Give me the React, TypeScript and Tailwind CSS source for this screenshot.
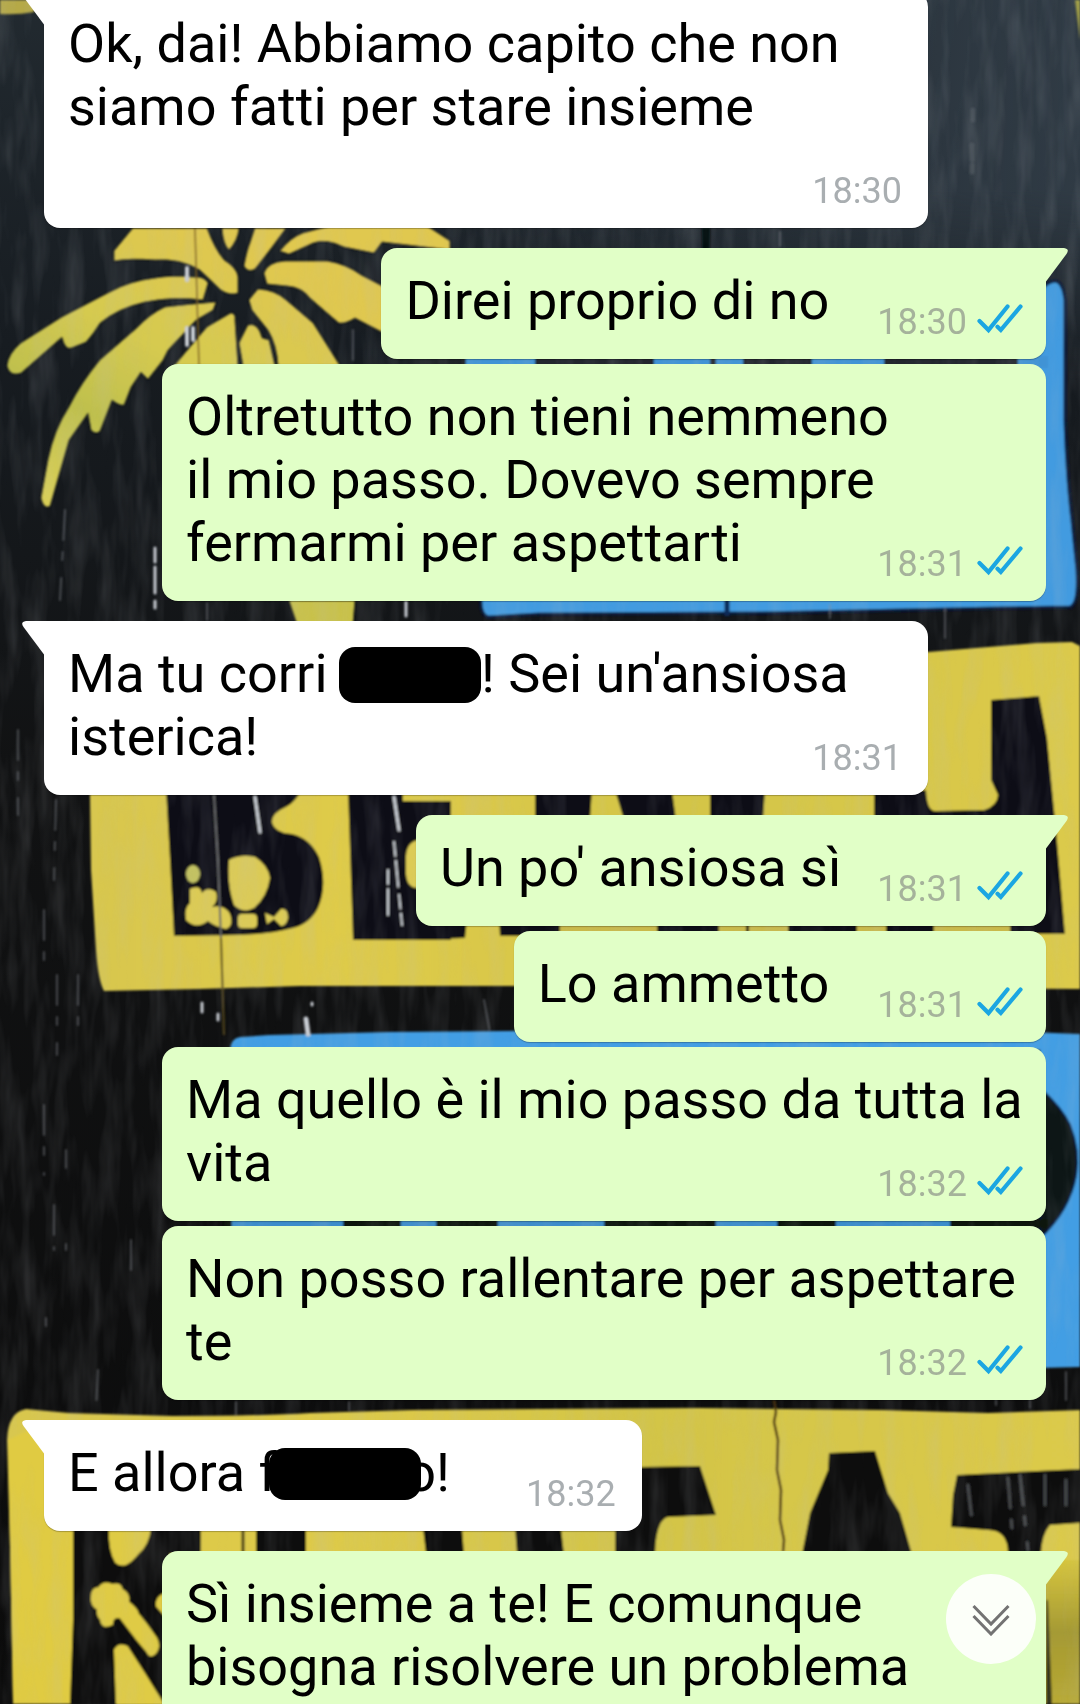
import type { ReactNode } from "react";
import clsx from "clsx";

type Message = {
  id: number;
  from: "me" | "them";
  lines: ReactNode[];
  time?: string;
  wide?: boolean;
  gap?: string;
};

function Redacted({ className }: { className: string }) {
  return (
    <span
      aria-label="redacted"
      className={clsx("relative -mt-2.5 -mb-1 -ml-0.5 inline-block rounded-2xl bg-black align-middle", className)}
    />
  );
}

const messages: Message[] = [
  {
    id: 1,
    from: "them",
    lines: ["Ok, dai! Abbiamo capito che non", "siamo fatti per stare insieme", "\u00a0"],
    time: "18:30",
    wide: true,
  },
  { id: 2, from: "me", lines: ["Direi proprio di no"], time: "18:30", gap: "pl-12" },
  {
    id: 3,
    from: "me",
    lines: ["Oltretutto non tieni nemmeno", "il mio passo. Dovevo sempre", "fermarmi per aspettarti"],
    time: "18:31",
    wide: true,
  },
  {
    id: 4,
    from: "them",
    lines: [
      <>
        Ma tu corri <Redacted className="h-14 w-[142px]" />! Sei un'ansiosa
      </>,
      "isterica!",
    ],
    time: "18:31",
    wide: true,
  },
  { id: 5, from: "me", lines: ["Un po' ansiosa sì"], time: "18:31", gap: "pl-9" },
  { id: 6, from: "me", lines: ["Lo ammetto"], time: "18:31", gap: "pl-12" },
  { id: 7, from: "me", lines: ["Ma quello è il mio passo da tutta la", "vita"], time: "18:32", wide: true },
  { id: 8, from: "me", lines: ["Non posso rallentare per aspettare", "te"], time: "18:32", wide: true },
  {
    id: 9,
    from: "them",
    lines: [
      <>
        E allora <span className="-mr-1.5">f</span>
        <Redacted className="-mr-4 h-13 w-[152px]" />o!
      </>,
    ],
    time: "18:32",
    gap: "pl-[76px]",
  },
  { id: 10, from: "me", lines: ["Sì insieme a te! E comunque", "bisogna risolvere un problema"], wide: true },
];

function Ticks() {
  return (
    <svg
      width="46"
      height="31"
      viewBox="0 0 46 31"
      fill="none"
      stroke="#1ba6e2"
      strokeWidth="4.2"
      className="mb-2 shrink-0"
      aria-label="read"
    >
      <path d="M2.500 17 11.500 26 30.500 2.500" strokeLinecap="round" />
      <path d="M20.500 22.800 23.800 26 43.500 2.500" strokeLinecap="round" />
    </svg>
  );
}

function Tail({ mine }: { mine: boolean }) {
  return (
    <svg
      width="24"
      height="34"
      viewBox="0 0 24 34"
      aria-hidden="true"
      className={clsx("absolute top-0", mine ? "left-full -ml-0.5 fill-[#e1ffc7]" : "right-full -mr-0.5 -scale-x-100 fill-white")}
    >
      <path d="M0 0H20Q26 1 22.500 6L2 33.500H0Z" />
    </svg>
  );
}

function Bubble({ message, first }: { message: Message; first: boolean }) {
  const mine = message.from === "me";

  return (
    <li
      className={clsx(
        "relative flex rounded-2xl pt-[21px] pb-4 pl-6 shadow-[0_1px_1px_rgba(0,0,0,0.25)]",
        mine ? "bg-[#e1ffc7] pr-[23px]" : "bg-white pr-[26px]",
        first && (mine ? "rounded-tr-none" : "rounded-tl-none"),
        first ? "mt-5" : "mt-[5px]",
        message.wide
          ? ["self-stretch", mine ? "ml-[118px]" : "mr-[118px]"]
          : mine ? "self-end" : "self-start",
      )}
    >
      {first && <Tail mine={mine} />}
      <p className="pb-[11px] text-[54px] leading-[63px] whitespace-nowrap text-black">
        {message.lines.map((line, i) => (
          <span key={i} className="block">
            {line}
          </span>
        ))}
      </p>
      {message.time && (
        <div
          className={clsx(
            "flex items-end justify-end gap-2.5 self-end",
            mine ? "text-[#a5b29b]" : "text-[#a9aeb1]",
            message.wide ? "w-0 grow" : message.gap,
          )}
        >
          <time className="text-4xl leading-[42px]">{message.time}</time>
          {mine && <Ticks />}
        </div>
      )}
    </li>
  );
}

// from / to pairs for the slivers of paint that show between two bubbles
function Band({ y, h, fill, spans }: { y: number; h: number; fill: string; spans: number[][] }) {
  return (
    <g fill={fill}>
      {spans.map(([from, to]) => (
        <rect key={from} x={from} y={y} width={to - from} height={h} />
      ))}
    </g>
  );
}

function Wallpaper() {
  return (
    <svg
      className="absolute inset-0 h-full w-full"
      viewBox="0 0 1080 1704"
      preserveAspectRatio="xMidYMin slice"
      aria-hidden="true"
    >
      <defs>
        <linearGradient id="wall" x1="0" y1="0" x2="0" y2="1">
          <stop offset="0" stopColor="#222a30" />
          <stop offset="0.2" stopColor="#171c21" />
          <stop offset="0.45" stopColor="#111213" />
          <stop offset="1" stopColor="#0b0b0b" />
        </linearGradient>
        <linearGradient id="sky" x1="0" y1="0" x2="1" y2="0">
          <stop offset="0.3" stopColor="#303b45" stopOpacity="0" />
          <stop offset="1" stopColor="#303b45" />
        </linearGradient>
        <linearGradient id="fade" x1="0" y1="0" x2="0" y2="1">
          <stop offset="0.5" stopColor="#fff" />
          <stop offset="1" stopColor="#000" />
        </linearGradient>
        <mask id="top">
          <rect width="1080" height="380" fill="url(#fade)" />
        </mask>
        <filter id="soft" x="0" y="0" width="1" height="1">
          <feGaussianBlur stdDeviation="0.9" />
        </filter>
        <filter id="grain" x="0" y="0" width="1" height="1">
          <feTurbulence type="fractalNoise" baseFrequency="0.06 0.012" numOctaves="3" seed="4" />
          <feColorMatrix values="0 0 0 0 0.5  0 0 0 0 0.52  0 0 0 0 0.55  0.9 0 0 0 -0.36" />
        </filter>
        <linearGradient id="leaf" gradientUnits="userSpaceOnUse" x1="200" y1="230" x2="60" y2="500">
          <stop offset="0" stopColor="#e0c84f" />
          <stop offset="0.4" stopColor="#d6ca50" />
          <stop offset="0.7" stopColor="#bfc04e" />
          <stop offset="1" stopColor="#d9cf55" />
        </linearGradient>
        <linearGradient id="paint" x1="0" y1="0" x2="1" y2="0">
          <stop offset="0" stopColor="#d8c74f" />
          <stop offset="0.25" stopColor="#dfcb49" />
          <stop offset="0.6" stopColor="#d3c547" />
          <stop offset="1" stopColor="#dcca4b" />
        </linearGradient>
        <linearGradient id="shade" x1="0" y1="0" x2="0" y2="1">
          <stop offset="0" stopColor="#d6c53e" />
          <stop offset="0.5" stopColor="#a59a35" />
          <stop offset="1" stopColor="#b8a92f" />
        </linearGradient>
      </defs>

      <rect width="1080" height="1704" fill="url(#wall)" />
      <rect width="1080" height="380" fill="url(#sky)" mask="url(#top)" />

      <g filter="url(#soft)">
        <path d="M0 0H34V12Q18 15 0 14Z" fill="#b5a946" />
        <path d="M1075 0H1080V40Z" fill="#a3a047" />
        <path d="M706 228V250" stroke="#06090c" strokeWidth="8" />

        {/* palm tree */}
        <g fill="url(#leaf)" stroke="#15161a" strokeWidth="1" strokeLinejoin="round">
          <path d="M133 228H207Q214 248 224 260 237 268 238 277V293Q230 296 221 290L200 270Q180 258 155 260 130 258 114 261V251Z" />
          <path d="M222 228H239Q238 240 229 250 223 244 222 228Z" />
          <path d="M255 228H286L272 247 255 269Q248 273 244 266 247 250 250 243Z" />
          <path d="M280 251Q290 238 303 233L330 226H427L450 241V250L382 242 374 253 344 247Q326 238 313 243L289 254Z" />
          <path d="M264 273Q268 262 285 261H327Q346 264 361 275L384 287V333L355 318Q345 324 339 323 326 312 310 298 302 287 287 286L267 284Z" />
          <path d="M249 300 258 289Q275 290 286 300L313 323 340 366H278Q277 345 268 330L252 310Z" />
          <path d="M248 325Q258 322 262 338L269 340 275 366H243L239 343Z" />
          <path d="M207 327 231 313Q236 314 235 320L238 366H174Z" />
          <path d="M208 283Q204 276 193 277 172 275 155 278 130 281 110 292L62 317 21 343Q8 354 7 366 10 377 21 373L62 337Q65 350 71 348L86 342Q94 333 100 323 118 308 145 302 175 296 203 300Z" />
          <path d="M216 302Q190 304 165 307 150 314 138 327L100 360Q81 383 69 407 54 430 48 460L41 498Q44 510 50 506L69 440 88 413 91 430Q96 435 100 431L112 400Q120 406 124 405L131 387 141 372 148 379 163 360 168 350 196 320 213 310Z" />
          <path d="M289 600H355L353 624H297Z" fill="#c9c249" />
        </g>
        <path d="M195 228 199 366" stroke="#7a5a1b" strokeWidth="1.500" />

        {/* upper blue block */}
        <path
          d="M481 598H1030V300L1047 284Q1062 274 1065 300V420Q1067 480 1072 520L1077 570Q1079 604 1070 607L998 608 760 613 540 614 488 617Q480 614 481 598Z"
          fill="#439be0"
          stroke="#0a1b3f"
          strokeWidth="3"
        />
        <path d="M727 598V616" stroke="#0c2c58" strokeWidth="5" />
        <rect x="462" y="357" width="556" height="10" fill="#22282e" />
        <Band y={356} h={12} fill="#3f93d5" spans={[[466, 535], [654, 710], [716, 743], [812, 884], [1018, 1048]]} />

        {/* upper yellow sign */}
        <path d="M88 652H928L1036 643 1072 642 1080 646V989L700 988 540 986 300 986 200 989 104 991Q98 980 96 950L91 870Z" fill="url(#paint)" />
        <g fill="#111112">
          <path d="M166 790H301Q296 802 286 807 272 813 272 822 275 833 292 834 310 838 319 857 328 885 318 908 310 924 293 928 270 934 241 935L174 936 170 860Z" />
          <path d="M348 790H403V801H451V940H353Z" />
          <path d="M535 790H592L590 820H535ZM615 790H672L676 820H624ZM710 790H765L763 820H710ZM874 790H926Q927 812 936 811L984 810Q997 806 998 795L991 780V700L1039 696 1047 738 1056 830 1065 934H874Z" />
          <path d="M418 920H467L465 938 418 940ZM499 920H560V936H500Z" />
        </g>
        <rect x="513" y="924" width="540" height="9" fill="#111112" />
        <Band y={924} h={9} fill="#c9b94c" spans={[[560, 657], [719, 746], [749, 788], [857, 886], [934, 1010]]} />
        <g fill="#dccb55">
          <path d="M229 860Q240 854 255 857 268 865 270 878 267 897 254 908 243 914 234 905 227 885 229 860Z" />
          <ellipse cx="193" cy="874" rx="7" ry="9" fill="#c3c264" />
          <path d="M190 889Q200 884 202 893 208 886 216 892 219 901 212 907 224 904 230 914 234 926 226 929 216 927 208 921 196 930 186 920 184 908 190 903Z" />
          <rect x="238" y="914" width="19" height="14" rx="4" />
          <path d="M265 913 274 917 281 909Q288 908 288 918 286 926 281 926L274 919 267 924Z" />
          <path d="M418 840Q407 842 406 856V874Q407 888 418 888Z" />
        </g>
        <path d="M214 795 218 860 221 940" fill="none" stroke="#66676a" strokeWidth="2" />
        <path d="M221 938 224 1035" stroke="#55471d" strokeWidth="2" />

        {/* lower blue block */}
        <path d="M230 1050Q231 1038 240 1037L269 1035 389 1032 513 1031H1000L1080 1034V1367L1040 1368V1050Z" fill="#439ee4" />
        <path d="M1040 1088Q1062 1108 1070 1125 1080 1150 1076 1175 1070 1210 1040 1238Z" fill="#101413" stroke="#04143c" strokeWidth="2" />
        <rect x="224" y="1219" width="824" height="9" fill="#11130f" />
        <Band y={1219} h={9} fill="#3a8ccb" spans={[[232, 343], [401, 436], [498, 604], [716, 777], [836, 950]]} />

        {/* lower yellow sign */}
        <path
          d="M13 1704 10 1547 7 1440Q8 1412 26 1409L69 1413 172 1416Q260 1416 310 1413L413 1410 540 1409 700 1408 884 1410 988 1413 1080 1410V1704Z"
          fill="url(#paint)"
        />
        <path d="M13 1704 10 1547 8 1440 40 1425 74 1535 72 1704Z" fill="#e0cb42" />
        <rect x="1045" y="1560" width="35" height="144" fill="url(#shade)" />
        <path d="M1046 1600H1048L1052 1704H1046Z" fill="#33321a" />
        <g fill="#0c0c0c">
          <path d="M73 1528H170V1704H70L73 1620Z" />
          <path d="M150 1528H201V1554H150ZM256 1528H306V1554H256ZM423 1528H462L464 1554H426ZM515 1528H561L564 1554H517Z" />
          <path d="M640 1467 700 1466 716 1515 668 1517Q656 1520 655 1554H615V1520Z" />
          <path d="M829 1453 875 1451 888 1493 900 1513 912 1554H802L810 1513 828 1470Z" />
          <path d="M957 1475 1080 1469V1523L1050 1525Q1042 1534 1041 1554H1008Q1008 1530 988 1530L951 1527 953 1495Z" />
        </g>
        <g fill="#dfcb45" stroke="#dfcb45" strokeWidth="2" strokeLinejoin="round">
          <path d="M110 1528H150Q148 1545 138 1553 125 1570 116 1562 109 1550 110 1528Z" />
          <path d="M92 1597Q92 1588 99 1588 104 1581 112 1585 121 1583 122 1590 130 1594 128 1602 137 1609 138 1614L146 1624 156 1638Q160 1646 156 1652 151 1659 147 1651L136 1638 120 1617Q112 1616 112 1624 102 1629 101 1619 97 1616 98 1609 91 1605 92 1597Z" />
          <path d="M115 1650Q119 1643 127 1647L145 1675 163 1704H117Z" />
          <path d="M165 1594Q156 1597 157 1606L165 1615Z" />
        </g>
        <path d="M243 1530V1554" stroke="#453a13" strokeWidth="3" />
        <path d="M774 1400 776 1412 774 1422 778 1440 777 1470 781 1490 780 1520 784 1540 783 1552" fill="none" stroke="#4b3413" strokeWidth="2.500" />

        {/* paint drips */}
        <g fill="none" stroke="#c9ced4" strokeWidth="2" strokeLinecap="round" strokeDasharray="14 5 26 8">
          <path d="M155 548V608M406 602V620" strokeWidth="3" />
          <path d="M187 268V280M187 328V345M193 328V340" strokeWidth="4" strokeDasharray="none" />
          <path d="M255 797 260 832M394 797 399 830" strokeWidth="3" strokeDasharray="none" />
          <path d="M394 842 402 925M388 870V918" />
          <path d="M306 1019 308 1034" strokeWidth="5" strokeDasharray="none" />
          <path d="M202 1003V1012M218 1014V1020M312 1003V1005" strokeWidth="3" strokeDasharray="none" />
        </g>
        <g fill="none" stroke="#8b9096" strokeWidth="2" strokeLinecap="round" strokeDasharray="30 12 8 18" opacity="0.45">
          <path d="M65 510 60 600M207 603V620M18 730V815M56 800 54 880M44 910V960M57 975V1055M78 975V1030" />
          <path d="M44 1105V1175M54 1205V1250M66 1150V1168M131 1240V1270M46 1318V1326M98 1370 96 1410M66 1244V1250" />
          <path d="M236 1402V1414M349 1402V1410M484 1000 490 1032M1066 1372V1400M1030 1385V1408M996 1390V1405" />
          <path d="M353 330V360M945 608V640M830 605V618M780 232V246" />
          <path d="M973 110V120M972 145V160M972 165V172" strokeWidth="5" strokeDasharray="none" opacity="0.5" />
          <path d="M968 1485 972 1520M1008 1478 1012 1530M1020 1475 1028 1550M1045 1475V1515M1066 1480V1505" strokeWidth="3" />
        </g>
      </g>
      <rect width="1080" height="1704" filter="url(#grain)" opacity="0.35" />
    </svg>
  );
}

export default function App() {
  return (
    <main className="relative h-screen overflow-hidden bg-[#111] font-['Roboto',sans-serif]">
      <Wallpaper />
      <ol className="relative -mt-[29px] flex flex-col pr-[34px] pl-11">
        {messages.map((message, i) => (
          <Bubble key={message.id} message={message} first={messages[i - 1]?.from !== message.from} />
        ))}
      </ol>
      <button
        type="button"
        aria-label="Scroll to latest message"
        className="absolute right-11 bottom-10 flex size-[90px] items-center justify-center rounded-full bg-[#fcfff9]"
      >
        <svg width="40" height="34" viewBox="0 0 40 34" fill="none" stroke="#737373" strokeWidth="3">
          <path d="M2.500 4 20 22 37.500 4M2.500 14 20 32 37.500 14" />
        </svg>
      </button>
    </main>
  );
}
